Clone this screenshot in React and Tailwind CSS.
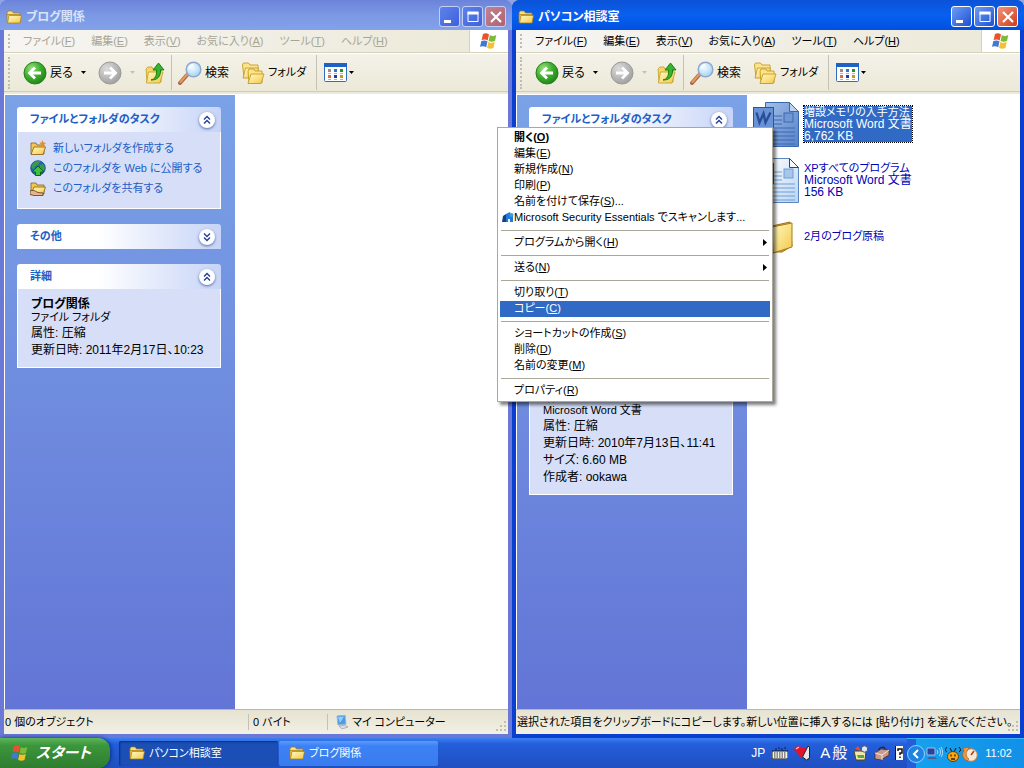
import React from "react";

const menus = [
  ["ファイル", "F"],
  ["編集", "E"],
  ["表示", "V"],
  ["お気に入り", "A"],
  ["ツール", "T"],
  ["ヘルプ", "H"],
];

const contextGroups = [
  [
    { label: "開く", accel: "O", bold: true },
    { label: "編集", accel: "E" },
    { label: "新規作成", accel: "N" },
    { label: "印刷", accel: "P" },
    { label: "名前を付けて保存", accel: "S", tail: "..." },
    { label: "Microsoft Security Essentials でスキャンします...", icon: true },
  ],
  [{ label: "プログラムから開く", accel: "H", sub: true }],
  [{ label: "送る", accel: "N", sub: true }],
  [
    { label: "切り取り", accel: "T" },
    { label: "コピー", accel: "C", active: true },
  ],
  [
    { label: "ショートカットの作成", accel: "S" },
    { label: "削除", accel: "D" },
    { label: "名前の変更", accel: "M" },
  ],
  [{ label: "プロパティ", accel: "R" }],
];

// gradients shared by all icons
function IconDefs() {
  return (
    <svg className="absolute" width="0" height="0" aria-hidden="true">
      <defs>
        <linearGradient id="folder" x1="0" y1="0" x2="1" y2="1">
          <stop offset="0" stopColor="#fffbc4" />
          <stop offset="1" stopColor="#f3c849" />
        </linearGradient>
        <radialGradient id="green" cx="0.35" cy="0.3" r="0.8">
          <stop offset="0" stopColor="#9be07f" />
          <stop offset="0.5" stopColor="#3fae2f" />
          <stop offset="1" stopColor="#1c7d13" />
        </radialGradient>
        <radialGradient id="gray" cx="0.35" cy="0.3" r="0.8">
          <stop offset="0" stopColor="#dcdcdc" />
          <stop offset="1" stopColor="#9b9b9b" />
        </radialGradient>
        <radialGradient id="lens" cx="0.4" cy="0.35" r="0.7">
          <stop offset="0" stopColor="#f4fcff" />
          <stop offset="1" stopColor="#9fd3f3" />
        </radialGradient>
        <linearGradient id="paper" x1="0" y1="0" x2="1" y2="1">
          <stop offset="0" stopColor="#ffffff" />
          <stop offset="1" stopColor="#b9d4f3" />
        </linearGradient>
        <linearGradient id="paperSelected" x1="0" y1="0" x2="1" y2="1">
          <stop offset="0" stopColor="#a3bfe8" />
          <stop offset="1" stopColor="#5582c8" />
        </linearGradient>
      </defs>
    </svg>
  );
}

function FolderIcon({ className }) {
  return (
    <svg className={className} viewBox="0 0 16 16">
      <path d="M1 4l1-2h4l1.500 2H14v3H1z" fill="#f9e07a" stroke="#a87b12" strokeWidth="0.700" />
      <path d="M1 13.500V5.500h13v8z" fill="#f0cb55" stroke="#a87b12" strokeWidth="0.700" />
      <path d="M1.500 14L3 6.500h12.500L14 14z" fill="url(#folder)" stroke="#a87b12" strokeWidth="0.700" />
    </svg>
  );
}

function WindowsFlag({ className }) {
  return (
    <svg className={className} viewBox="0 0 20 18">
      <path d="M4 2c2-1 4-1 6 .5L8.700 8.500C6.800 7.200 4.800 7.200 2.600 8z" fill="#e8532b" />
      <path d="M10.800 3c2 1.200 4 1.200 6.500 0L16 8.900c-2.200 1.100-4.400 1.100-6.400 0z" fill="#7bbb3a" />
      <path d="M2.400 9c2.200-.9 4.200-.8 6.100.4L7.200 15.200c-2-1.300-4-1.300-6.200-.4z" fill="#4179d3" />
      <path d="M9.400 9.900c2 1.100 4.200 1.200 6.400.1L14.500 15.900c-2.300 1.100-4.400 1-6.400-.2z" fill="#f5c12e" />
    </svg>
  );
}

function CircleArrow({ back }) {
  return (
    <svg className="size-6 shrink-0" viewBox="0 0 24 24">
      <circle cx="12" cy="12" r="11" fill={back ? "url(#green)" : "url(#gray)"} stroke={back ? "#23801b" : "#9a9a9a"} />
      <path
        d={back ? "M18 12H7M12 6.500L6.500 12l5.500 5.500" : "M6 12h11M12 6.500l5.500 5.500-5.500 5.500"}
        fill="none"
        stroke="#fff"
        strokeWidth="2.800"
      />
    </svg>
  );
}

function UpIcon() {
  return (
    <svg className="size-6 shrink-0" viewBox="0 0 24 24">
      <path d="M3 8l2-2h4l1 2h8v13H4z" fill="#f6d766" stroke="#c29a26" strokeWidth="0.800" />
      <path d="M3.500 22L5.500 11H20l-3 11z" fill="url(#folder)" stroke="#c29a26" strokeWidth="0.800" />
      <path d="M8 19c4-1 6-4 5.500-10H10l5.500-7L21 9h-3.500c.5 6-3 10.500-9.500 10z" fill="#35b52c" stroke="#14780f" strokeWidth="0.900" />
    </svg>
  );
}

function SearchIcon() {
  return (
    <svg className="size-6 shrink-0" viewBox="0 0 24 24">
      <path d="M2 22L9 14" stroke="#a8694a" strokeWidth="4" strokeLinecap="round" />
      <path d="M2.500 21L9 13.500" stroke="#e29a68" strokeWidth="2" strokeLinecap="round" />
      <circle cx="15.500" cy="8.500" r="7.300" fill="url(#lens)" stroke="#8fa6cf" strokeWidth="1.500" />
      <path d="M11 8c.5-2.500 2-4 4.500-4.300" fill="none" stroke="#fff" strokeWidth="1.400" />
    </svg>
  );
}

function FoldersIcon() {
  return (
    <svg className="size-6 shrink-0" viewBox="0 0 24 24">
      <path d="M1.500 4l1-2h5l1.500 2h8v12h-14z" fill="#fbe58a" stroke="#c89a25" strokeWidth="0.900" />
      <path d="M2 17L4.500 7h13l-2 10z" fill="url(#folder)" stroke="#c89a25" strokeWidth="0.900" />
      <path d="M7 10l1-2h5l1 2h7v12H8z" fill="#fbe58a" stroke="#c89a25" strokeWidth="0.900" />
      <path d="M7 22.500L10 13h13l-3 9.500z" fill="url(#folder)" stroke="#c89a25" strokeWidth="0.900" />
    </svg>
  );
}

function ViewsIcon() {
  const dots = ["#8f8f9c", "#3c6fd0", "#2a8f2a", "#e06a3c", "#1b3f9e", "#c59a1c"];
  return (
    <svg className="h-5 w-6 shrink-0" viewBox="0 0 24 20">
      <rect x="0.500" y="0.500" width="22" height="18" rx="1" fill="#fff" stroke="#2f6dc0" />
      <path d="M0 0h23v4H0z" fill="#1d62c4" />
      {dots.map((c, i) => (
        <g key={c}>
          <rect x={4 + (i % 3) * 6} y={i < 3 ? 6 : 12} width="3" height="3" fill={c} />
          <path d={`M${4 + (i % 3) * 6} ${i < 3 ? 10.5 : 16.5}h3`} stroke="#a8b4c8" />
        </g>
      ))}
    </svg>
  );
}

function DropArrow({ muted }) {
  return (
    <svg className="h-[3px] w-[5px] shrink-0" viewBox="0 0 5 3">
      <path d="M0 0h5L2.500 3z" fill={muted ? "#c3c0b4" : "#000"} />
    </svg>
  );
}

function TaskIcon({ kind }) {
  if (kind === "web") {
    return (
      <svg className="size-4 shrink-0" viewBox="0 0 16 16">
        <circle cx="8" cy="8" r="7.300" fill="#2467b8" stroke="#14458f" strokeWidth="0.800" />
        <path d="M2 5c2-4 6-4.500 8-3.500L8 5 5 6l-1 3-2.500-1zM10 5l3-1 2 4-2 4-3-2z" fill="#3a9d46" />
        <path d="M8 6l6 6h-3.500v3.500h-5V12H2z" fill="#3fc03c" stroke="#0d5a17" strokeWidth="0.900" />
      </svg>
    );
  }
  return (
    <svg className="size-4 shrink-0" viewBox="0 0 16 16">
      <path d="M1 3h5l1 2h7v9H1z" fill="#f0c654" stroke="#8a5f10" strokeWidth="0.800" />
      <path d="M1 14.500L4 7h11.500L13 14.500z" fill="url(#folder)" stroke="#8a5f10" strokeWidth="0.800" />
      {kind === "new" ? (
        <path d="M12.500 0l1 2.500 2.500.5-2 2 .5 2.500-2-1.500-2.500 1 1-2.500L9.500 2.500l2 0z" fill="#ef8a28" />
      ) : (
        <path d="M0 11c3-1.500 5 0 8 1.500l5 .5v2.500H4L0 14.500z" fill="#e9b48d" stroke="#5a3a1c" strokeWidth="0.800" />
      )}
    </svg>
  );
}

function WordIcon({ selected }) {
  const line = selected ? "#3c68b4" : "#6f9fd8";
  return (
    <svg className="size-12 shrink-0" viewBox="0 0 48 48">
      <path
        d="M13.500 2.500h24l9 9v35h-33z"
        fill={selected ? "url(#paperSelected)" : "url(#paper)"}
        stroke={selected ? "#3a66b0" : "#5c85bd"}
      />
      <path d="M37.500 2.500v9h9z" fill={selected ? "#bcd0ef" : "#f5faff"} stroke={selected ? "#3a66b0" : "#33475f"} />
      <path d="M22 16h8M22 20h8M22 24h8M20 28h23M20 32h23M20 36h23M20 40h23M20 44h23" stroke={line} />
      <rect x="32" y="13" width="9" height="9" fill={selected ? "#6f97d4" : "#a7c6ea"} stroke={line} />
      <rect x="1.500" y="7.500" width="20" height="20" fill={selected ? "#6a92d6" : "#dceafc"} stroke="#2c55a0" />
      <path d="M4.500 12.500l3 10 4-9 2 9 5-10" fill="none" stroke={selected ? "#2a4f9a" : "#2c55a0"} strokeWidth="2.400" />
    </svg>
  );
}

function BigFolderIcon() {
  return (
    <svg className="size-12 shrink-0" viewBox="0 0 48 48">
      <path d="M3 13l2-3h12l3 4 18-4 2 24-10 6H4z" fill="#e0ab2c" stroke="#9b7216" />
      <path d="M20 15l20-4v24l-19 6z" fill="url(#folder)" stroke="#a67c18" />
    </svg>
  );
}

function Accel({ label, accel, tail }) {
  return (
    <span className="whitespace-nowrap">
      {label}
      {accel && (
        <>
          (<u>{accel}</u>)
        </>
      )}
      {tail}
    </span>
  );
}

function TitleBar({ title, active }) {
  const button = "flex size-[21px] items-center justify-center rounded-[3px] border ";
  const blue = active
    ? "border-white bg-linear-to-br from-[#6f9cf5] to-[#1c4fd0]"
    : "border-[#c3cff4] bg-linear-to-br from-[#5f83ea] to-[#3d60dc]";
  const red = active
    ? "border-white bg-linear-to-br from-[#f0937a] to-[#cf3712]"
    : "border-[#c3cff4] bg-linear-to-br from-[#c08296] to-[#b0626f]";
  return (
    <header
      className={
        "flex h-[30px] shrink-0 items-center rounded-t-lg pt-[3px] pr-1.5 pl-1.5 " +
        (active
          ? "bg-linear-to-b from-[#0c52d8] via-[#0860f0] to-[#0150e0]"
          : "bg-linear-to-b from-[#6c83da] via-[#7c98e4] to-[#83a2ea]")
      }
    >
      <FolderIcon className="mr-1 size-4 shrink-0" />
      <h1 className={"flex-1 truncate text-[12px] font-bold " + (active ? "text-white" : "text-[#d8e4f8]")}>{title}</h1>
      <div className="flex gap-0.5">
        <button aria-label="最小化" className={button + blue}>
          <svg className="size-3.5" viewBox="0 0 14 14">
            <path d="M1 10h7v3H1z" fill="#fff" />
          </svg>
        </button>
        <button aria-label="最大化" className={button + blue}>
          <svg className="size-3.5" viewBox="0 0 14 14">
            <path d="M2 2.500h10v9H2z" fill="none" stroke="#fff" />
            <path d="M1.500 1.500h11v3h-11z" fill="#fff" />
          </svg>
        </button>
        <button aria-label="閉じる" className={button + red}>
          <svg className="size-3.5" viewBox="0 0 14 14">
            <path d="M2 2l10 10M12 2L2 12" stroke="#fff" strokeWidth="2.200" />
          </svg>
        </button>
      </div>
    </header>
  );
}

function Grip({ className }) {
  return <div className={"w-0.5 shrink-0 border-l-2 border-dotted border-[#c1bdae] " + className} />;
}

function MenuBar({ active }) {
  return (
    <nav className="flex h-[23px] shrink-0 items-stretch border-b border-[#d5d1bf] bg-linear-to-r from-[#f6f5f2] to-[#ece9d8]">
      <Grip className="my-1 ml-1" />
      <div className={"flex flex-1 items-center gap-4 pl-[13px] text-[11px] " + (active ? "text-black" : "text-[#a7a596]")}>
        {menus.map(([label, accel]) => (
          <button key={accel}>
            <Accel label={label} accel={accel} />
          </button>
        ))}
      </div>
      <div className="flex w-[39px] items-center justify-center border-l border-[#d5d1bf] bg-white">
        <WindowsFlag className="h-[18px] w-5" />
      </div>
    </nav>
  );
}

function ToolBar() {
  return (
    <div className="flex h-[39px] shrink-0 items-center border-t border-b border-t-white border-b-[#cfcbb8] bg-linear-to-b from-[#f4f2e9] to-[#ece9d8] text-[12px]">
      <Grip className="ml-1 h-8" />
      <button className="ml-[13px] flex items-center gap-[3px]">
        <CircleArrow back />
        <span className="w-7 text-left">戻る</span>
        <DropArrow />
      </button>
      <button aria-label="進む" className="ml-3 flex items-center gap-2">
        <CircleArrow />
        <DropArrow muted />
      </button>
      <button aria-label="上へ" className="ml-2">
        <UpIcon />
      </button>
      <div className="ml-1 h-[35px] border-l border-[#c5c2b2]" />
      <button className="ml-1.5 flex items-center gap-[3px]">
        <SearchIcon />
        検索
      </button>
      <button className="ml-3 flex items-center gap-[3px] text-[11px]">
        <FoldersIcon />
        <span className="w-10 text-left">フォルダ</span>
      </button>
      <div className="ml-2 h-[35px] border-l border-[#c5c2b2]" />
      <button aria-label="表示" className="ml-[7px] flex items-center gap-px">
        <ViewsIcon />
        <DropArrow />
      </button>
    </div>
  );
}

function Panel({ title, open = true, children }) {
  return (
    <section>
      <header className="flex h-[25px] items-center justify-between rounded-t-[3px] bg-linear-to-r from-white from-40% to-[#c7d4f7] pr-1.5 pl-[13px]">
        <h2 className="text-[11px] font-bold text-[#215dc6]">{title}</h2>
        <button aria-label={open ? "閉じる" : "開く"} className="size-4 rounded-full bg-white shadow-sm shadow-[#6378b0]">
          <svg viewBox="0 0 16 16">
            <path
              d={open ? "M5 7.500l3-3 3 3M5 11.500l3-3 3 3" : "M5 4.500l3 3 3-3M5 8.500l3 3 3-3"}
              fill="none"
              stroke="#1f3a94"
              strokeWidth="1.300"
            />
          </svg>
        </button>
      </header>
      {open && children}
    </section>
  );
}

function SideBar({ children }) {
  return (
    <aside className="flex w-[230px] shrink-0 flex-col gap-[15px] bg-linear-to-b from-[#7ba2e7] to-[#6375d6] px-3 py-3 pr-3.5">
      {children}
    </aside>
  );
}

function ExplorerWindow({ title, active, sidebar, status, children }) {
  return (
    <section
      className={
        "flex min-w-0 flex-1 flex-col rounded-t-lg " + (active ? "bg-[#0a3fd0]" : "bg-[#6a78d8]")
      }
    >
      <TitleBar title={title} active={active} />
      <div className="mx-1 mb-1 flex flex-1 flex-col bg-[#ece9d8]">
        <MenuBar active={active} />
        <ToolBar />
        <div className="mt-0.5 flex flex-1 border-t border-l border-white bg-white">
          <SideBar>{sidebar}</SideBar>
          <div className="min-w-0 flex-1 pt-px pl-[5px]">{children}</div>
        </div>
        <footer className="flex h-[25px] shrink-0 items-center border-t border-[#bab7a8] bg-linear-to-b from-[#e6e3d2] to-[#f2f0e4] text-[11px]">
          {status}
          <svg className="mt-auto mb-px size-3.5 shrink-0" viewBox="0 0 14 14">
            <path d="M10 2h2v2h-2zM6 6h2v2H6zM10 6h2v2h-2zM2 10h2v2H2zM6 10h2v2H6zM10 10h2v2h-2z" fill="#c3bfad" />
          </svg>
        </footer>
      </div>
    </section>
  );
}

function Details({ name, kind, lines }) {
  return (
    <div className="border border-t-0 border-white bg-[#d6dff7] px-[13px] pt-[9px] pb-2 whitespace-nowrap">
      <p className="text-[12px] leading-3 font-bold">{name}</p>
      <p className="text-[11px] leading-[15px]">{kind}</p>
      {lines.map((line) => (
        <p key={line} className="text-[12px] leading-[17px]">
          {line}
        </p>
      ))}
    </div>
  );
}

function BlogSidebar() {
  const tasks = [
    ["new", "新しいフォルダを作成する"],
    ["web", "このフォルダを Web に公開する"],
    ["share", "このフォルダを共有する"],
  ];
  return (
    <>
      <Panel title="ファイルとフォルダのタスク">
        <ul className="border border-t-0 border-white bg-[#d6dff7] px-3 pt-1.5 pb-2.5 text-[11px] text-[#215dc6]">
          {tasks.map(([kind, label]) => (
            <li key={kind}>
              <a href="#" className="flex h-5 items-center gap-[7px] whitespace-nowrap">
                <TaskIcon kind={kind} />
                {label}
              </a>
            </li>
          ))}
        </ul>
      </Panel>
      <Panel title="その他" open={false} />
      <Panel title="詳細">
        <Details name="ブログ関係" kind="ファイル フォルダ" lines={["属性: 圧縮", "更新日時: 2011年2月17日、10:23"]} />
      </Panel>
    </>
  );
}

function ConsultSidebar() {
  return (
    <>
      <Panel title="ファイルとフォルダのタスク">
        <div className="h-[235px] border border-t-0 border-white bg-[#d6dff7]" />
      </Panel>
      <Details
        name="増設メモリの入手方法"
        kind="Microsoft Word 文書"
        lines={["属性: 圧縮", "更新日時: 2010年7月13日、11:41", "サイズ: 6.60 MB", "作成者: ookawa"]}
      />
    </>
  );
}

function FileItem({ icon, lines, selected }) {
  return (
    <li className="flex h-14 items-center gap-1">
      {icon}
      <button
        className={
          "flex flex-col text-left text-[12px] leading-3 whitespace-nowrap " +
          (selected ? "bg-[#316ac5] text-white outline-1 outline-black outline-dotted" : "text-[#0000b8]")
        }
      >
        <span className="text-[11px]">{lines[0]}</span>
        {lines.slice(1).map((l) => (
          <span key={l}>{l}</span>
        ))}
      </button>
    </li>
  );
}

function ContextMenu() {
  return (
    <div
      role="menu"
      className="absolute top-[127px] left-[497px] w-[276px] border border-[#aca899] bg-white p-0.5 shadow-[3px_3px_3px_rgba(0,0,0,0.5)]"
    >
      {contextGroups.map((group, g) => (
        <div key={g}>
          {g > 0 && <hr className="mx-px my-1 border-[#aca899]" />}
          {group.map((item) => (
            <button
              key={item.label}
              role="menuitem"
              className={
                "flex h-4 w-full items-center pb-0.5 text-left text-[11px] leading-[14px] " +
                (item.active ? "bg-[#316ac5] text-white" : "text-black") +
                (item.bold ? " font-bold" : "")
              }
            >
              <span className="flex w-3.5 shrink-0 items-center">
                {item.icon && (
                  <svg className="ml-0.5 size-3" viewBox="0 0 12 12">
                    <path d="M1 5l3-2v8H0z" fill="#123f8c" />
                    <path d="M4 3l4-2 1 3 2 1v6H4z" fill="#1f7ad8" />
                    <path d="M6 8h2v3H6z" fill="#fff" />
                    <circle cx="9.500" cy="4" r="2" fill="#3ba0ea" />
                  </svg>
                )}
              </span>
              <Accel label={item.label} accel={item.accel} tail={item.tail} />
              {item.sub && (
                <svg className="mr-[3px] ml-auto h-[7px] w-1" viewBox="0 0 4 7">
                  <path d="M0 0v7l4-3.500z" fill="#000" />
                </svg>
              )}
            </button>
          ))}
        </div>
      ))}
    </div>
  );
}

function Taskbar() {
  const task = "flex h-[25px] w-[159px] items-center gap-1 rounded-[2px] pl-2.5 text-left text-[11px] text-white ";
  return (
    <footer className="flex h-[30px] shrink-0 items-center bg-linear-to-b from-[#3a80f0] via-[#245edb] via-20% to-[#1f4fc0] text-white">
      <button className="flex h-full w-[110px] items-center gap-1.5 rounded-r-xl bg-linear-to-b from-[#5eb55c] via-[#3c963b] via-25% to-[#2f7d30] pl-2.5 text-[15px] font-bold italic shadow-[1px_0_4px_#0c2f80]">
        <WindowsFlag className="h-[18px] w-5 shrink-0" />
        スタート
      </button>
      <div className="ml-[9px] flex flex-1 gap-px">
        <button className={task + "bg-[#1b4fb5] shadow-[inset_1px_1px_2px_#0d2f7c]"}>
          <FolderIcon className="size-4 shrink-0" />
          パソコン相談室
        </button>
        <button className={task + "bg-linear-to-b from-[#5c9bff] via-[#3c81f3] via-20% to-[#3a7cf0]"}>
          <FolderIcon className="size-4 shrink-0" />
          ブログ関係
        </button>
      </div>
      <div className="flex items-center text-[12px]">
        <span className="w-[21px]">JP</span>
        <svg className="h-3 w-4" viewBox="0 0 16 12">
          <path d="M3 2h2M6 1h2M9 2h2M12 1h2" stroke="#0a1c5a" />
          <path d="M0 4h16v8H0z" fill="#f4f4ee" stroke="#111" />
          <path d="M2 6h12M2 8h12M2 10h12" stroke="#222" strokeDasharray="1.500 1" />
        </svg>
        <svg className="ml-1.5 size-4" viewBox="0 0 16 16">
          <path d="M0 5c0-4 6-5 8-2 2-2 4-1 4 1l-1 4-4 5-3-4z" fill="#e2142d" />
          <path d="M2 4l3-2" stroke="#ffb0b8" strokeWidth="1.500" />
          <path d="M11 7l3-6 1.500 1v11l-3 2-4-3z" fill="#e6e6e6" stroke="#222" />
        </svg>
        <span className="ml-2.5 text-[15px] leading-5">A</span>
        <span className="ml-0.5 w-[21px] text-[15px] leading-5">般</span>
        <svg className="size-4" viewBox="0 0 16 16">
          <path d="M1 6h12l-1 9H3z" fill="#f2e9a8" stroke="#53480f" />
          <path d="M2 4l3-3 3 5z" fill="#e64b3a" />
          <circle cx="11.500" cy="4" r="3.200" fill="#dbe7f5" stroke="#4a5570" />
          <path d="M4 10h7v3H5z" fill="#57a746" />
        </svg>
        <svg className="ml-[5px] size-4" viewBox="0 0 16 16">
          <path d="M1 8l6-4 8 1v5l-8 5-6-1z" fill="#c99a8a" stroke="#4c2c18" strokeWidth="0.800" />
          <path d="M1 8l7 2 7-5M8 10v5" fill="none" stroke="#f7e3da" />
          <path d="M5 5c0-3 6-4 6-1" fill="none" stroke="#222" strokeWidth="1.200" />
        </svg>
        <svg className="mr-1 ml-[5px] h-3.5 w-2" viewBox="0 0 8 14">
          <path d="M0 0h8v14H0z" fill="#f8f8f4" />
          <path d="M0 0h1v14H0z" fill="#111" />
          <path d="M3 5V3h4v4H5v2M5 10.500v1.500" fill="none" stroke="#111" strokeWidth="1.500" />
        </svg>
      </div>
      <div className="flex h-[30px] items-center border-t border-[#3cb6f5] bg-linear-to-r from-[#245edb] from-8% via-[#16a0ee] via-8% to-[#1290e8] pr-3 text-[11px]">
        <button
          aria-label="インジケータを隠す"
          className="flex size-[18px] items-center justify-center rounded-full border border-[#8fd0ff] bg-[#1f83e4]"
        >
          <svg className="size-2.5" viewBox="0 0 10 10">
            <path d="M7 1L3 5l4 4" fill="none" stroke="#fff" strokeWidth="2" />
          </svg>
        </button>
        <svg className="ml-px size-[17px]" viewBox="0 0 17 17">
          <path d="M1 3h8v7H1z" fill="#27439c" stroke="#a9b8e0" />
          <path d="M3 12h6l2 2H1z" fill="#4c5f8e" />
          <path d="M11 5c1 1 1 3 0 4M13 3c2 2 2 6 0 8M15 2c2 3 2 8 0 10" fill="none" stroke="#dbeaff" strokeWidth="0.800" />
        </svg>
        <svg className="ml-0.5 size-4" viewBox="0 0 16 16">
          <path d="M2 1C0 3 0 5 2 6M14 1c2 2 2 4 0 5M5 2l2 4M11 2L9 6" fill="none" stroke="#111" />
          <ellipse cx="8" cy="10.500" rx="5.500" ry="5" fill="#f6a912" stroke="#6b3a05" />
          <path d="M6 8.500v2M10 8.500v2M6 13h4" stroke="#3a1c00" strokeWidth="1.300" />
        </svg>
        <svg className="ml-px size-4" viewBox="0 0 16 16">
          <circle cx="9" cy="9" r="6.300" fill="#f3ead9" stroke="#d9792b" />
          <path d="M9 9l3-4" stroke="#c03a1a" strokeWidth="1.500" />
          <path d="M1 2l6-1-1 3c-3 3-2 7 1 9l-2 2C0 12-.5 8 2 5z" fill="#f0953a" stroke="#a85512" strokeWidth="0.600" />
        </svg>
        <time className="ml-[7px]">11:02</time>
      </div>
    </footer>
  );
}

export default function App() {
  return (
    <div className="relative flex h-screen flex-col overflow-hidden bg-[#8fa5e4] font-['Liberation_Sans','Noto_Sans_CJK_JP',sans-serif] text-black [font-feature-settings:'palt']">
      <IconDefs />
      <main className="flex min-h-0 flex-1">
        <ExplorerWindow
          title="ブログ関係"
          sidebar={<BlogSidebar />}
          status={
            <>
              <span className="w-[244px] pl-px">0 個のオブジェクト</span>
              <span className="w-[79px] border-l border-[#c5c2b2] pl-1">0 バイト</span>
              <span className="flex flex-1 items-center gap-[3px] border-l border-[#c5c2b2] pl-[7px]">
                <svg className="size-3.5" viewBox="0 0 14 14">
                  <path d="M2 1l8-1 1 9-8 1z" fill="#4a9be8" stroke="#9fb3cc" />
                  <path d="M3 2l6-.6L5 8z" fill="#8fd0ff" />
                  <path d="M4 11l6-1 3 2-6 2z" fill="#d8dce4" stroke="#8a93a3" strokeWidth="0.600" />
                </svg>
                マイ コンピューター
              </span>
            </>
          }
        />
        <ExplorerWindow
          title="パソコン相談室"
          active
          sidebar={<ConsultSidebar />}
          status={
            <span className="min-w-0 flex-1 pl-px whitespace-nowrap">
              選択された項目をクリップボードにコピーします。新しい位置に挿入するには [貼り付け] を選んでください。
            </span>
          }
        >
          <ul>
            <FileItem
              icon={<WordIcon selected />}
              selected
              lines={["増設メモリの入手方法", "Microsoft Word 文書", "6,762 KB"]}
            />
            <FileItem icon={<WordIcon />} lines={["XPすべてのプログラム", "Microsoft Word 文書", "156 KB"]} />
            <FileItem icon={<BigFolderIcon />} lines={["2月のブログ原稿"]} />
          </ul>
        </ExplorerWindow>
      </main>
      <Taskbar />
      <ContextMenu />
    </div>
  );
}
